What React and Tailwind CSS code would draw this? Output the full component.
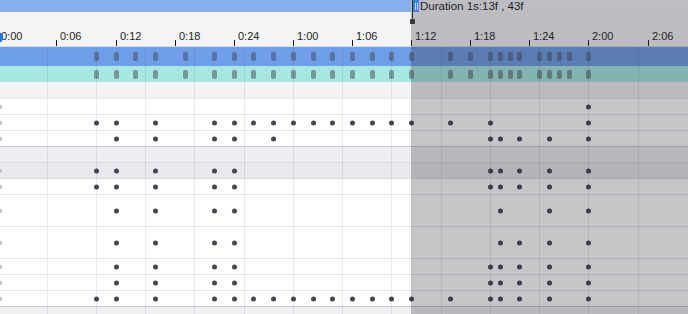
import React from "react";

const X = (f) => Math.round(-2.6 + 9.85 * f);

const label = (f) => `${Math.floor(f / 30)}:${String(f % 30).padStart(2, "0")}`;

const TICKS = [0, 6, 12, 18, 24, 30, 36, 42, 48, 54, 60, 66];
const GRID = [5, 10, 15, 20, 25, 30, 35, 40, 45, 50, 55, 60, 65];
const KEYS = [10, 12, 14, 16, 19, 22, 24, 26, 28, 30, 32, 34, 36, 38, 40, 42, 46, 48, 50, 51, 52, 53, 55, 56, 57, 58, 60];

const LONG = [10, 12, 16, 22, 24, 26, 28, 30, 32, 34, 36, 38, 40, 42, 46];

const ROWS = [
  { cls: "h-[16px] bg-[#f3f2f5]", dots: [], mark: false },
  { cls: "h-[16px] bg-white border-t border-[#e6e5ea]", dots: [60], mark: true },
  { cls: "h-[16px] bg-white border-t border-[#e6e5ea]", dots: [...LONG, 50, 60], mark: true },
  { cls: "h-[16px] bg-white border-t border-[#e6e5ea]", dots: [12, 16, 22, 24, 28, 50, 51, 53, 56, 60], mark: true },
  { cls: "h-[16px] bg-[#efeef2] border-t border-[#cac9cf]", dots: [], mark: false },
  { cls: "h-[16px] bg-[#e9e8ec] border-t border-[#dddce2]", dots: [10, 12, 16, 22, 24, 50, 51, 53, 56, 60], mark: true },
  { cls: "h-[16px] bg-white border-t border-[#dddce2]", dots: [10, 12, 16, 22, 24, 50, 51, 53, 56, 60], mark: true },
  { cls: "h-[32px] bg-white border-t border-[#e6e5ea]", dots: [12, 16, 22, 24, 51, 56, 60], mark: true },
  { cls: "h-[32px] bg-white border-t border-[#e6e5ea]", dots: [12, 16, 22, 24, 51, 53, 56, 60], mark: true },
  { cls: "h-[16px] bg-white border-t border-[#e6e5ea]", dots: [12, 16, 22, 24, 50, 51, 53, 56, 60], mark: true },
  { cls: "h-[16px] bg-white border-t border-[#e6e5ea]", dots: [12, 16, 22, 24, 50, 51, 53, 56, 60], mark: true },
  { cls: "h-[16px] bg-white border-t border-[#e6e5ea]", dots: [...LONG, 50, 51, 53, 56, 60], mark: true },
  { cls: "h-[16px] bg-[#f0eff2] border-t border-[#c6c5cb]", dots: [], mark: false },
];

function Row({ cls, dots, mark }) {
  return (
    <div className={`relative ${cls}`}>
      {mark && (
        <div className="absolute left-0 top-1/2 -translate-y-1/2 w-[2px] h-[4px] bg-[#c6c6ce]" />
      )}
      {dots.map((f) => (
        <div
          key={f}
          className="absolute top-1/2 -translate-y-1/2 w-[5px] h-[5px] rounded-full bg-[#46435a]"
          style={{ left: X(f) - 2 }}
        />
      ))}
    </div>
  );
}

function KeyRow({ cls, pillTop }) {
  return (
    <div className={`relative ${cls}`}>
      {KEYS.map((f) => (
        <div
          key={f}
          className={`absolute ${pillTop} w-[5px] h-[9px] rounded-[2px] bg-[#46465a]/50`}
          style={{ left: X(f) - 2 }}
        />
      ))}
    </div>
  );
}

export default function App() {
  return (
    <div className="relative w-[688px] h-[314px] overflow-hidden bg-white font-['Liberation_Sans',sans-serif] select-none">
      {/* top bar */}
      <div className="flex h-[12px]">
        <div className="w-[411px] bg-[#85b0ec]" />
        <div className="flex-1 bg-[#f6f6f8] pl-[9px] text-[11.5px] leading-[12px] text-[#1c1c1c] whitespace-nowrap">
          Duration 1s:13f , 43f
        </div>
      </div>

      {/* ruler */}
      <div className="relative h-[35px] bg-[#f4f4f6] border-b border-[#d6dbe5]">
        {TICKS.map((f) => (
          <React.Fragment key={f}>
            <div className="absolute top-[28px] w-px h-[6px] bg-[#1e1e1e]" style={{ left: X(f) }} />
            <div
              className="absolute top-[19px] text-[11px] leading-[11px] text-[#1e1e1e] whitespace-nowrap"
              style={{ left: X(f) + 4 }}
            >
              {label(f)}
            </div>
          </React.Fragment>
        ))}
      </div>

      {/* tracks */}
      <div>
        <KeyRow cls="h-[19px] bg-[#6e9ee8]" pillTop="top-[5px]" />
        <KeyRow cls="h-[16px] bg-[#a7e9e1]" pillTop="top-[4px]" />
        {ROWS.map((r, i) => (
          <Row key={i} {...r} />
        ))}
      </div>

      {/* vertical grid lines */}
      {GRID.map((f) => (
        <div
          key={f}
          className="absolute top-[47px] bottom-0 w-px bg-[#3c3a50]/[0.11]"
          style={{ left: X(f) }}
        />
      ))}

      {/* start marker */}
      <div className="absolute left-[-7px] top-[32px] w-[10px] h-[11px] rounded-full bg-[#2474e4]" />

      {/* out-of-range overlay */}
      <div className="absolute left-[411px] top-0 right-0 bottom-0 bg-[#2a2630]/[0.27]" />

      {/* handle */}
      <div className="absolute left-[413px] top-0 w-[6px] h-[12px] bg-[#3a80e6] flex items-center justify-center gap-[1px]">
        <div className="w-px h-[7px] bg-white/70" />
        <div className="w-px h-[7px] bg-white/70" />
      </div>

      {/* playhead */}
      <div className="absolute left-[412px] top-0 w-px h-[21px] bg-[#2b2b2b]" />
      <div className="absolute left-[410px] top-[19px] w-[5px] h-[5px] rounded-t-[1px] bg-[#3a3a3a]" />
    </div>
  );
}
